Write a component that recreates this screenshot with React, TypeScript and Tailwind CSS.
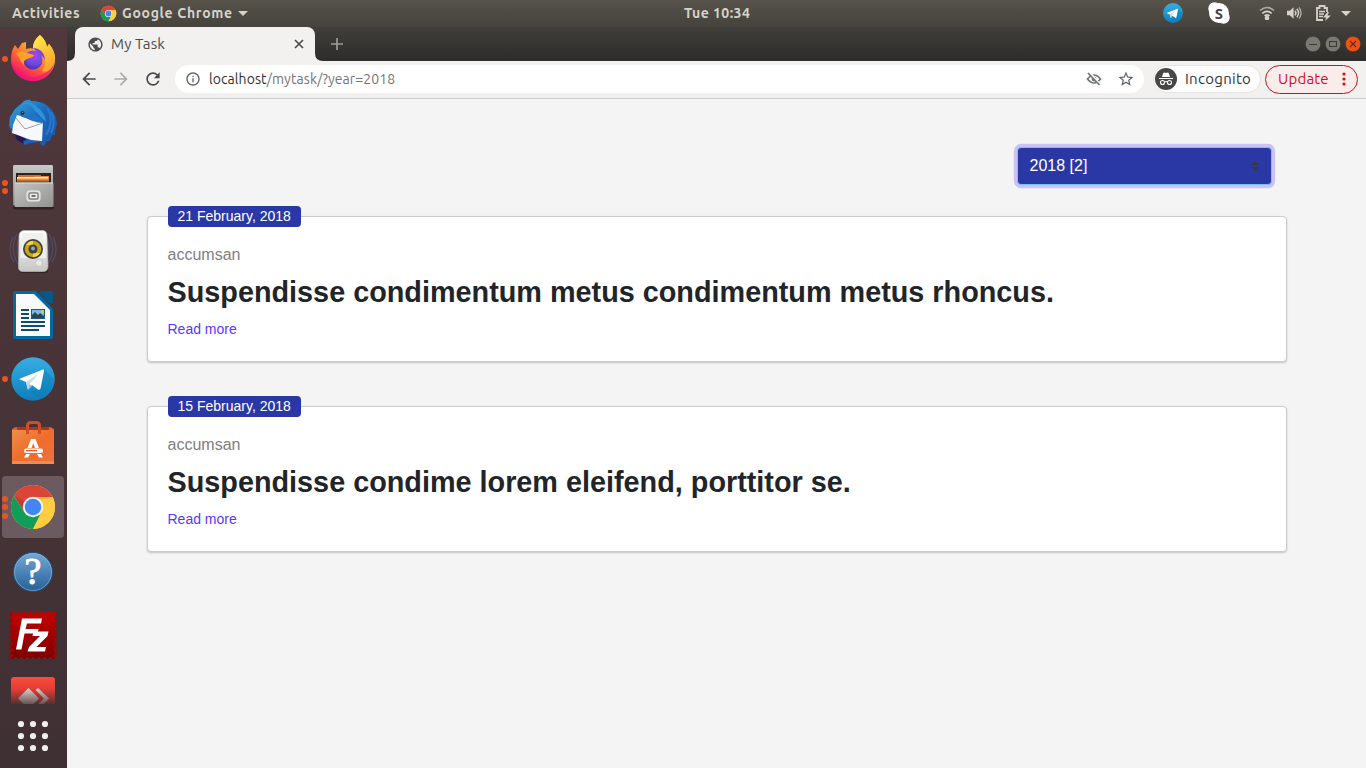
import React from 'react';
import { MdArrowBack, MdArrowForward, MdRefresh, MdStarBorder, MdPublic, MdOutlineInfo } from 'react-icons/md';

function Firefox() {
  return (
    <svg width="48" height="48" viewBox="0 0 48 48">
      <defs>
        <linearGradient id="ffBody" x1="0.85" y1="0.1" x2="0.3" y2="1">
          <stop offset="0" stopColor="#fff44f" />
          <stop offset="0.35" stopColor="#ffa02e" />
          <stop offset="0.65" stopColor="#ff5a36" />
          <stop offset="1" stopColor="#f0047f" />
        </linearGradient>
        <radialGradient id="ffGlobe" cx="0.6" cy="0.25" r="0.8">
          <stop offset="0" stopColor="#a646f0" />
          <stop offset="0.6" stopColor="#6a4be0" />
          <stop offset="1" stopColor="#4b2a9c" />
        </radialGradient>
        <linearGradient id="ffTop" x1="0" y1="0" x2="0.5" y2="1">
          <stop offset="0" stopColor="#fff14a" />
          <stop offset="1" stopColor="#ffa52b" />
        </linearGradient>
      </defs>
      <g transform="translate(0 -1)">
        <path d="M31 1C34 4 37 7 38 13L40 10C43 14 47 19 46 27C45 39 35 47 24 47C11 47 2 37 2 26C2 20 3 15 6 11L9 15L13 9L17 8L17 15C20 14 23 14 25 15C23 9 27 4 31 1Z" fill="url(#ffBody)" />
        <path d="M31 1C34 4 37 7 38 13L40 10C44 14 47 21 45 29C43 36 38 39 33 37C37 32 37 26 34 21C31 17 25 18 24 14C24 8 28 4 31 1Z" fill="url(#ffTop)" />
        <circle cx="24" cy="26" r="9.500" fill="url(#ffGlobe)" />
        <path d="M24 14C30 14 36 18 36 26C34 22 30 20 27 17Z" fill="#8145dd" />
        <path d="M7 20C12 16 16 18 18 19C20 20 23 20 25 21C24 24 20 24 18 25C15 26 14 28 15 31C11 28 11 23 7 20Z" fill="#ffa126" />
        <path d="M3 29C6 41 18 46 29 42C37 40 44 34 45 29C44 40 35 47 24 47C13 47 4 40 3 29Z" fill="#f0147c" opacity="0.65" />
      </g>
    </svg>
  );
}

function Thunderbird() {
  return (
    <svg width="48" height="48" viewBox="0 0 48 48">
      <defs>
        <linearGradient id="tbBody" x1="0" y1="0" x2="1" y2="1">
          <stop offset="0" stopColor="#35a5e0" />
          <stop offset="0.5" stopColor="#1c67bd" />
          <stop offset="1" stopColor="#1b56ad" />
        </linearGradient>
      </defs>
      <path d="M13 4C15 1 19 0 22 1L21 2C36 1 48 11 48 26L46 31L46 36L43 36L41 42L38 42L35 47L32 46L31 43L22 44L16 46L14 44L9 41L6 35L3 34L0 26L1 18L6 10Z" fill="url(#tbBody)" />
      <path d="M2 29L7 34L18 41L14 42L15 45L8 41L6 36L4 35Z" fill="#281653" />
      <path d="M8 16L18 19L34 23L33 42L22 41L3 34L4 26Z" fill="#f8f8fa" />
      <path d="M7 19L16 30L34 24" fill="none" stroke="#9aa1a9" strokeWidth="1" />
      <path d="M12 6C20 3 23 8 26 12C31 16 33 20 37 23C36 15 32 11 28 8C23 2 16 2 12 6Z" fill="#2e94d8" />
      <path d="M10 15C15 18 22 14 28 17C32 19 34 21 34 24C25 24 18 19 13 18Z" fill="#2374c4" />
      <path d="M38 9C43 16 43 27 37 36M42 13C46 20 45 28 42 34" fill="none" stroke="#2679cb" strokeWidth="2" />
      <circle cx="13.500" cy="14" r="2" fill="#16335b" />
      <circle cx="13.500" cy="13.500" r="0.700" fill="#b57b5d" />
    </svg>
  );
}

function Files() {
  return (
    <svg width="48" height="48" viewBox="0 0 48 48">
      <defs>
        <linearGradient id="cabTop" x1="0" y1="0" x2="0" y2="1">
          <stop offset="0" stopColor="#c9c9c7" />
          <stop offset="1" stopColor="#858583" />
        </linearGradient>
        <linearGradient id="cabFront" x1="0" y1="0" x2="1" y2="1">
          <stop offset="0" stopColor="#c4c4c2" />
          <stop offset="1" stopColor="#929290" />
        </linearGradient>
      </defs>
      <rect x="4" y="43" width="41" height="3.500" rx="2" fill="#000" opacity="0.35" />
      <path d="M5 2H43Q44 2 44 4V42H4V4Q4 2 5 2Z" fill="url(#cabTop)" />
      <rect x="7" y="10" width="35" height="10" fill="#292421" />
      <rect x="9" y="12" width="23" height="4" fill="#d86e22" />
      <path d="M8 14H24L26 13H40V19H8Z" fill="#e98734" />
      <rect x="8" y="14" width="31" height="1.500" fill="#fff0d2" />
      <rect x="8" y="17.500" width="32" height="1.500" fill="#b74b17" />
      <rect x="5.500" y="19.500" width="39" height="24.500" rx="1.500" fill="url(#cabFront)" />
      <rect x="6" y="19.500" width="38" height="1" fill="#dededc" />
      <rect x="18" y="28" width="13" height="10" rx="2" fill="#d5d5d3" stroke="#eee" strokeWidth="1" />
      <rect x="20" y="30" width="9" height="6" rx="1" fill="#eee" stroke="#555" strokeWidth="1" />
      <rect x="22.500" y="32.200" width="4" height="1.500" fill="#444" />
    </svg>
  );
}

function Rhythmbox() {
  return (
    <svg width="48" height="48" viewBox="0 0 48 48">
      <defs>
        <linearGradient id="spk" x1="0" y1="0" x2="0" y2="1">
          <stop offset="0" stopColor="#fff" />
          <stop offset="1" stopColor="#c6c6c3" />
        </linearGradient>
      </defs>
      <g fill="none" stroke="#566a9b" strokeWidth="1.200" opacity="0.45">
        <path d="M8 7C3 15 3 28 9 37M4 10C0 18 0 27 5 35M11 8C7 17 7 27 12 37" />
        <path d="M40 7C45 15 45 28 39 37M44 10C48 18 48 27 43 35M37 8C41 17 41 27 36 37" />
      </g>
      <rect x="10" y="41" width="29" height="5" rx="2" fill="#000" opacity="0.3" />
      <path d="M15 3.500H34Q38 4 38 9L39 39Q39 44.500 34 44.500H14Q9 44.500 9.500 39L10 9Q10 4 15 3.500Z" fill="url(#spk)" stroke="#b5b5b5" strokeWidth="0.700" />
      <path d="M14 6H34L37 31H11Z" fill="#efefec" />
      <circle cx="24" cy="22" r="10" fill="#3e3d3a" />
      <circle cx="24" cy="22" r="8.300" fill="#c5a616" />
      <path d="M17 18A8 8 0 0 1 24 14V18ZM31 26A8 8 0 0 1 24 30V26Z" fill="#efd63f" />
      <circle cx="24" cy="22" r="4.500" fill="#3d4248" />
      <circle cx="24" cy="21.500" r="2" fill="#9aa4b0" />
      <circle cx="30" cy="36" r="3.500" fill="#e8e8e6" stroke="#c5c5c5" />
      <rect x="15" y="35" width="3" height="4" rx="1" fill="none" stroke="#d2d2d2" />
    </svg>
  );
}

function Writer() {
  return (
    <svg width="48" height="48" viewBox="0 0 48 48">
      <path d="M6 0H27L44 18V46Q44 48 42 48H6Q4 48 4 46V2Q4 0 6 0Z" fill="#0369a3" />
      <path d="M31 0H42Q44 0 44 2V13L40 12L31 3Z" fill="#075887" />
      <path d="M7 3H25L41 19V45H7Z" fill="#fafafa" />
      <path d="M12 19H20M12 23H20M12 27H20M12 31H36M12 35H36M12 39H30" stroke="#0b4d73" strokeWidth="2" />
      <rect x="22" y="18" width="14" height="10" fill="#0b6090" />
      <rect x="23" y="19" width="12" height="8" fill="#78bce3" />
      <path d="M23 27V24L26 21L29 24L31 22L35 25V27Z" fill="#31434d" />
      <circle cx="33.500" cy="20.500" r="1.500" fill="#f4c13d" />
    </svg>
  );
}

function Telegram({ size = 48 }: { size?: number }) {
  return (
    <svg width={size} height={size} viewBox="0 0 48 48">
      <defs>
        <linearGradient id="tgBg" x1="0" y1="0" x2="0" y2="1">
          <stop offset="0" stopColor="#37aee2" />
          <stop offset="1" stopColor="#0d7fbd" />
        </linearGradient>
      </defs>
      <circle cx="24" cy="24" r="21.700" fill="url(#tgBg)" />
      <path d="M35 14L45 24Q44 37 32 44L21 36L32 34Z" fill="#087bb4" opacity="0.4" />
      <path d="M10 24L34 14.500Q35.500 14 35 16L31.500 33.500Q31 35.500 29 34.500L23 30L19 34.500L17 27Z" fill="#fff" />
      <path d="M17 27L30 18.500L20.500 29L19 35Z" fill="#c8daea" />
      <path d="M20.500 29L23 31L19 35Z" fill="#9cbdd4" />
    </svg>
  );
}

function SoftwareBag() {
  return (
    <svg width="48" height="48" viewBox="0 0 48 48">
      <defs>
        <linearGradient id="bag" x1="0" y1="0" x2="1" y2="1">
          <stop offset="0" stopColor="#ed9049" />
          <stop offset="0.5" stopColor="#ef6c2b" />
          <stop offset="1" stopColor="#ee7240" />
        </linearGradient>
      </defs>
      <path d="M5 8H43L45 12H3Z" fill="#a8391c" />
      <path d="M3 10L8 8V12H3ZM45 10L40 8V12H45Z" fill="#e76132" />
      <rect x="3" y="11" width="42" height="34" fill="url(#bag)" />
      <rect x="3" y="42" width="42" height="3" fill="#f58a50" />
      <path d="M18.500 15V6.500Q18.500 3.500 22 3.500H27Q30.500 3.500 30.500 6.500V15" fill="none" stroke="#cf4e28" strokeWidth="3" />
      <path d="M22 20H26.500L30 29H26L24.300 24L22.500 29H18.500Z" fill="#fff" />
      <rect x="15" y="29.500" width="19" height="4.500" rx="2" fill="#fff" />
      <rect x="17" y="31" width="11" height="1.300" fill="#e95d22" />
      <path d="M17 35H21L19 38.500H15ZM28 35H32L34 38.500H30Z" fill="#fff" />
    </svg>
  );
}

function Chrome({ size = 48 }: { size?: number }) {
  return (
    <svg width={size} height={size} viewBox="0 0 48 48">
      <circle cx="24" cy="24" r="22" fill="#ffcd40" />
      <path d="M24 14H43.600A22 22 0 0 0 4.950 13L15.340 29Z" fill="#db4437" />
      <path d="M4.950 13A22 22 0 0 0 24 46L32.660 29L24 34L15.340 29Z" fill="#0f9d58" />
      <path d="M43.600 14H24L32.660 29L24 46A22 22 0 0 0 43.600 14Z" fill="#ffcd40" />
      <path d="M24 14H43.600L32 17Z" fill="#d99f21" opacity="0.4" />
      <path d="M6 13L15.300 29L17 20Z" fill="#9f332b" opacity="0.4" />
      <circle cx="24" cy="24" r="10.200" fill="#f1f1f1" />
      <circle cx="24" cy="24" r="8.200" fill="#4285f4" />
    </svg>
  );
}

function Help() {
  return (
    <svg width="48" height="48" viewBox="0 0 48 48">
      <defs>
        <linearGradient id="helpBg" x1="0" y1="0" x2="0" y2="1">
          <stop offset="0" stopColor="#74a9d4" />
          <stop offset="1" stopColor="#265f98" />
        </linearGradient>
      </defs>
      <circle cx="24" cy="25" r="19.500" fill="url(#helpBg)" stroke="#1f4f7e" />
      <circle cx="24" cy="25" r="18.500" fill="none" stroke="#8ab8dc" opacity="0.6" />
      <text x="24" y="37" textAnchor="middle" className="font-['Liberation_Serif',serif] text-[38px]" fill="#fff" stroke="#fff" strokeWidth="0.900">?</text>
    </svg>
  );
}

function FileZilla() {
  const bumps = [3.500, 9.400, 15.200, 21.100, 26.900, 32.800, 38.600, 44.500];
  return (
    <svg width="48" height="48" viewBox="0 0 48 48">
      <defs>
        <linearGradient id="fz" x1="0" y1="0" x2="0" y2="1">
          <stop offset="0" stopColor="#c40000" />
          <stop offset="1" stopColor="#7f0000" />
        </linearGradient>
      </defs>
      <rect x="2" y="2" width="44" height="44" fill="url(#fz)" />
      {bumps.map((p) => (
        <g key={p}>
          <circle cx={p} cy="2" r="1.900" fill="#bd0000" />
          <circle cx={p} cy="46" r="1.900" fill="#850000" />
          <circle cx="2" cy={p} r="1.900" fill="#a60000" />
          <circle cx="46" cy={p} r="1.900" fill="#a60000" />
        </g>
      ))}
      <path d="M13 7.500H33L32 12.500H18L16.500 18H29.500L28.500 22.500H15.500L12.500 38.500H7Z" fill="#fff" />
      <path d="M24.500 20.500H39.500L38.500 25L27.500 36H37L36 40.500H18.500L20 36L31 25H23.500Z" fill="#fff" />
    </svg>
  );
}

function AnyDesk() {
  return (
    <svg width="44" height="27" viewBox="0 0 44 27">
      <defs>
        <linearGradient id="adBg" x1="0" y1="0" x2="0" y2="1">
          <stop offset="0" stopColor="#ff4b3c" />
          <stop offset="0.450" stopColor="#e43d35" />
          <stop offset="1" stopColor="#57302f" />
        </linearGradient>
        <linearGradient id="adMark" x1="0" y1="0" x2="0" y2="1">
          <stop offset="0" stopColor="#ddd2d0" />
          <stop offset="1" stopColor="#6c5251" />
        </linearGradient>
      </defs>
      <path d="M3 0H41Q44 0 44 3V27H0V3Q0 0 3 0Z" fill="url(#adBg)" />
      <path d="M7 21.500L17.500 11L28 21.500L22.500 27H12.500Z" fill="url(#adMark)" />
      <path d="M24.500 13L27 11L38 21.500L32.500 27H27.500L33 21.500Z" fill="url(#adMark)" />
    </svg>
  );
}

function AppsGrid() {
  return (
    <svg width="34" height="34" viewBox="0 0 34 34" fill="#f1efee">
      {[5, 17, 29].map((y) => [5, 17, 29].map((x) => <circle key={`${x}-${y}`} cx={x} cy={y} r="3.100" />))}
    </svg>
  );
}

function Slot({ dots = 0, active = false, children }: { dots?: number; active?: boolean; children: React.ReactNode }) {
  return (
    <div className="relative flex h-16 w-[66px] shrink-0 items-center justify-center">
      {active && <div className="absolute inset-y-px left-[2px] w-[62px] rounded-[4px] bg-[#6b5a60]" />}
      <div className="absolute inset-y-0 left-[2px] flex flex-col items-center justify-center gap-[2.500px]">
        {Array.from({ length: dots }, (_, i) => (
          <i key={i} className="size-[6px] rounded-full bg-[#e95420]" />
        ))}
      </div>
      <div className="relative">{children}</div>
    </div>
  );
}

function Launcher() {
  return (
    <aside className="flex w-[67px] shrink-0 flex-col overflow-hidden bg-linear-to-b from-[#50383c] to-[#3f3033]">
      <Slot dots={1}><Firefox /></Slot>
      <Slot><Thunderbird /></Slot>
      <Slot dots={2}><Files /></Slot>
      <Slot><Rhythmbox /></Slot>
      <Slot><Writer /></Slot>
      <Slot dots={1}><Telegram /></Slot>
      <Slot><SoftwareBag /></Slot>
      <Slot dots={3} active><Chrome /></Slot>
      <Slot><Help /></Slot>
      <Slot><FileZilla /></Slot>
      <div className="flex h-[37px] w-[66px] shrink-0 items-end justify-center"><AnyDesk /></div>
      <div className="flex h-16 w-[66px] shrink-0 items-center justify-center"><AppsGrid /></div>
    </aside>
  );
}

function Caret() {
  return <svg width="10" height="5" viewBox="0 0 10 5" fill="#d5d3cf"><path d="M0 0H10L5 5Z" /></svg>;
}

function SystemBar() {
  return (
    <header className="flex h-[27px] shrink-0 items-center bg-linear-to-b from-[#57534a] to-[#45433d] font-['Ubuntu','Noto_Sans',sans-serif] text-[14px] leading-[27px] font-bold text-[#d6d2ca]">
      <div className="flex w-[684px] items-center pl-3">
        <span className="w-[68px] whitespace-nowrap tracking-[0.580px]">Activities</span>
        <span className="ml-5 flex"><Chrome size={17} /></span>
        <span className="ml-[5px] w-[111px] whitespace-nowrap tracking-[0.700px]">Google Chrome</span>
        <span className="ml-[5px]"><Caret /></span>
      </div>
      <span className="whitespace-nowrap tracking-[0.450px]">Tue 10:34</span>
      <div className="flex flex-1 items-center justify-end pr-[15px]">
        <span className="relative -top-px flex"><Telegram size={22} /></span>
        <svg className="relative -top-px ml-[24px]" width="22" height="22" viewBox="0 0 22 22">
          <circle cx="11" cy="11" r="10" fill="#fff" /><circle cx="6.500" cy="6.500" r="6.200" fill="#fff" /><circle cx="15.500" cy="15.500" r="6.200" fill="#fff" />
          <text x="11" y="16.500" textAnchor="middle" fill="#4a4842" className="font-['Noto_Sans',sans-serif] text-[15px] font-bold">S</text>
        </svg>
        <svg className="relative -top-px ml-[29px]" width="16" height="14" viewBox="0 0 16 14" fill="none" stroke="#d6d2ca" strokeWidth="1.600">
          <path d="M1 4.500Q8 -1.500 15 4.500" opacity="0.7" /><path d="M3.300 7.300Q8 3.300 12.700 7.300" /><path d="M5.500 10Q8 7.800 10.500 10" /><circle cx="8" cy="12" r="1.500" fill="#d6d2ca" />
        </svg>
        <svg className="relative -top-px ml-3" width="16" height="14" viewBox="0 0 17 14" fill="none" stroke="#d6d2ca" strokeWidth="1.500">
          <path d="M0 4.500H3L7 1V13L3 9.500H0Z" fill="#d6d2ca" stroke="none" /><path d="M8.500 4.500Q10.500 7 8.500 9.500" /><path d="M10.500 2.500Q14 7 10.500 11.500" /><path d="M12.800 1Q17 7 12.800 13" opacity="0.7" />
        </svg>
        <svg className="relative -top-px ml-[13px]" width="15" height="16" viewBox="0 0 15 16" fill="none" stroke="#d6d2ca" strokeWidth="1.800">
          <path d="M7 15H1V3H3.500V1H8.500V3H11V7" /><path d="M3 6.500H9M3 9H8M3 11.500H7" strokeWidth="1.500" /><path d="M11.500 7L7 12.500H10.300L9 16L15 10.500H11.500L13 7Z" fill="#d6d2ca" stroke="none" />
        </svg>
        <span className="ml-[10px]"><Caret /></span>
      </div>
    </header>
  );
}

function WindowButton({ kind }: { kind: 'min' | 'max' | 'close' }) {
  return (
    <svg width="16" height="16" viewBox="0 0 16 16">
      <circle cx="8" cy="8" r="7.700" fill={kind === 'close' ? '#ef5013' : '#7b7a72'} stroke="#30302d" strokeWidth="0.500" />
      {kind === 'min' && <path d="M4 8.500H12" stroke="#3a3935" />}
      {kind === 'max' && <rect x="4.500" y="5.500" width="7" height="5" fill="none" stroke="#3a3935" />}
      {kind === 'close' && <path d="M5 5L11 11M11 5L5 11" stroke="#58301f" strokeWidth="1.100" />}
    </svg>
  );
}

function TabStrip() {
  return (
    <div className="flex h-[34px] shrink-0 bg-linear-to-b from-[#403f3b] to-[#2c2c2a] pl-[8px]">
      <div className="relative flex w-[240px] items-center rounded-t-[8px] bg-[#f2f1f0] pl-3 pr-[11px]">
        <svg className="absolute bottom-0 -left-[8px]" width="8" height="8"><path d="M0 8Q8 8 8 0V8Z" fill="#f2f1f0" /></svg>
        <svg className="absolute -right-[8px] bottom-0" width="8" height="8"><path d="M8 8Q0 8 0 0V8Z" fill="#f2f1f0" /></svg>
        <MdPublic className="size-[17px] text-[#494c50]" />
        <span className="ml-[7px] font-['Ubuntu','Noto_Sans',sans-serif] text-[15px] tracking-[0.100px] text-[#4b4b4b]">My Task</span>
        <svg className="ml-auto" width="10" height="10" viewBox="0 0 10 10"><path d="M1 1L9 9M9 1L1 9" stroke="#4b4b4b" strokeWidth="1.700" /></svg>
      </div>
      <svg className="mt-[11px] ml-4" width="12" height="12" viewBox="0 0 12 12"><path d="M6 0V12M0 6H12" stroke="#9c9c99" strokeWidth="1.700" /></svg>
      <div className="mt-[9px] mr-[5px] ml-auto flex gap-1">
        <WindowButton kind="min" /><WindowButton kind="max" /><WindowButton kind="close" />
      </div>
    </div>
  );
}

function EyeOff() {
  return (
    <svg width="16" height="16" viewBox="0 0 16 16" fill="none" stroke="#727375" strokeWidth="1.700">
      <path d="M1.500 8Q8 0 14.500 8Q8 16 1.500 8Z" /><circle cx="8" cy="8" r="2.400" fill="#727375" stroke="none" />
      <path d="M3 1L14 13.500" stroke="#fff" strokeWidth="2" /><path d="M2 2L13.500 14" />
    </svg>
  );
}

function Toolbar() {
  return (
    <div className="flex h-[38px] shrink-0 items-center border-b border-[#cfcdcb] bg-[#f2f1f0] pr-2 pb-px pl-3 font-['Ubuntu','Noto_Sans',sans-serif] text-[14px]">
      <MdArrowBack className="size-5 text-[#47494c]" />
      <MdArrowForward className="ml-3 size-5 text-[#acacac]" />
      <MdRefresh className="ml-3 size-5 text-[#47494c]" />
      <div className="ml-[12px] flex h-7 w-[969px] items-center rounded-full bg-white pr-[9px] pl-[10px]">
        <MdOutlineInfo className="size-4 text-[#5f6368]" />
        <span className="ml-2 w-[190px] tracking-[0.080px] whitespace-nowrap text-[#747474]"><span className="text-[#303030]">localhost</span>/mytask/?year=2018</span>
        <span className="ml-auto"><EyeOff /></span>
        <MdStarBorder className="ml-[15px] size-[18px] text-[#5f6368]" />
      </div>
      <div className="ml-[9px] flex h-7 w-[108px] items-center rounded-full border border-[#e5e4e3] bg-[#fdfdfd] pl-px">
        <svg width="22" height="22" viewBox="0 0 22 22">
          <circle cx="11" cy="11" r="11" fill="#474747" />
          <path d="M7 9L8 5.500Q9 4 11 5Q13 4 14 5.500L15 9ZM4 10H18V11H4Z" fill="#fff" />
          <g fill="none" stroke="#fff" strokeWidth="1.100"><circle cx="7.500" cy="14.500" r="2" /><circle cx="14.500" cy="14.500" r="2" /><path d="M9.500 14Q11 13 12.500 14" /></g>
        </svg>
        <span className="ml-[8px] text-[15px] tracking-[0.280px] text-[#303438]">Incognito</span>
      </div>
      <div className="ml-1 flex h-[29px] w-[93px] items-center rounded-full border border-[#c91318] bg-[#fbecec] pl-3">
        <span className="w-[52px] text-[15px] tracking-[0.200px] text-[#cf1016]">Update</span>
        <svg className="ml-[12px]" width="4" height="14" fill="#cf1016"><circle cx="2" cy="2" r="1.600" /><circle cx="2" cy="7" r="1.600" /><circle cx="2" cy="12" r="1.600" /></svg>
      </div>
    </div>
  );
}

function Article({ date, title }: { date: string; title: string }) {
  return (
    <article className="relative h-[146px] rounded-[4px] border border-[#cbcbcb] bg-white px-[19.500px] pt-[26px] shadow-[0_1px_2px_rgba(0,0,0,0.2)]">
      <span className="absolute -top-[11px] left-5 h-[21px] w-[133px] rounded-[4px] bg-[#2a38a6] pl-[9.500px] text-[14px] leading-[21px] whitespace-nowrap text-white">{date}</span>
      <p className="text-[16px] leading-6 text-[#808080]">accumsan</p>
      <h2 className="mt-[8px] text-[28.800px] leading-[35px] font-bold whitespace-nowrap text-[#212529]">{title}</h2>
      <a className="mt-[9px] block text-[14px] leading-[21px] text-[#5c35ff]">Read more</a>
    </article>
  );
}

export default function App() {
  return (
    <div className="flex h-[768px] w-[1366px] flex-col overflow-hidden">
      <SystemBar />
      <div className="flex min-h-0 flex-1">
        <Launcher />
        <div className="flex min-w-0 flex-1 flex-col">
          <TabStrip />
          <Toolbar />
          <main className="flex-1 bg-[#f4f4f4] px-20 pt-12 pr-[79px] font-['Liberation_Sans',sans-serif]">
            <div className="flex justify-end pr-[15px]">
              <div className="flex h-[38px] w-[255px] items-center justify-between rounded-[4px] border border-[#80bdff] bg-[#2a38a6] pr-3 pl-[11.500px] text-[16px] text-white shadow-[0_0_0_3.2px_#cac3f5]">
                <span>2018 [2]</span>
                <svg width="8" height="10" viewBox="0 0 8 10" fill="#343a40"><path d="M0 4L4 0L8 4ZM0 6H8L4 10Z" /></svg>
              </div>
            </div>
            <div className="mt-[31px] flex flex-col gap-11">
              <Article date="21 February, 2018" title="Suspendisse condimentum metus condimentum metus rhoncus." />
              <Article date="15 February, 2018" title="Suspendisse condime lorem eleifend, porttitor se." />
            </div>
          </main>
        </div>
      </div>
    </div>
  );
}
